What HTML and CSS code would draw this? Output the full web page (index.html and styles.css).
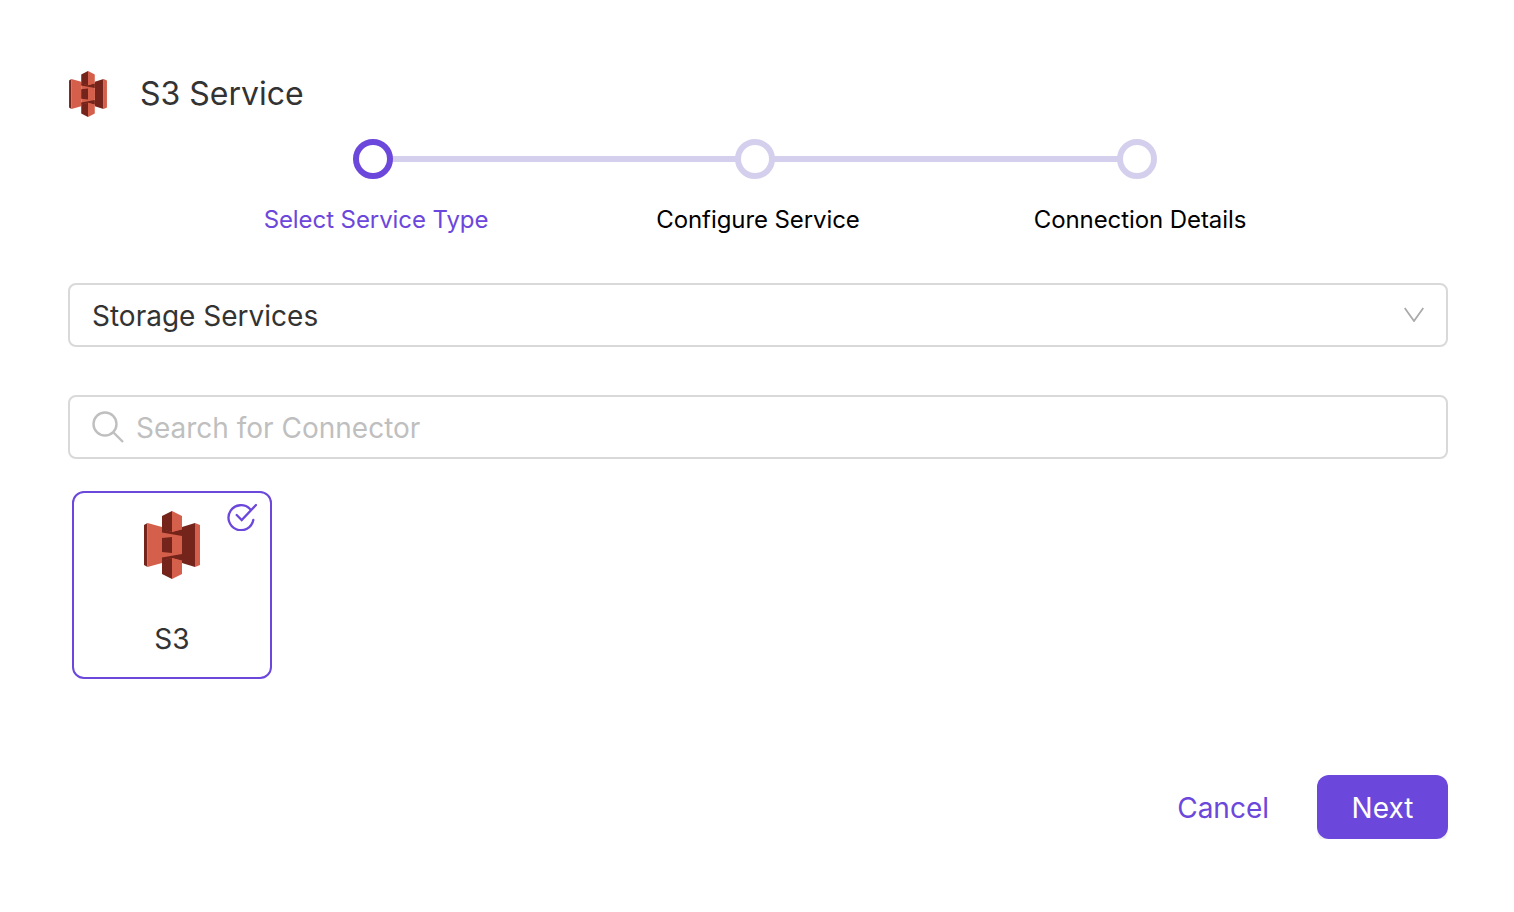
FILE: index.html
```html
<!DOCTYPE html>
<html lang="en">
<head>
    <meta charset="UTF-8">
    <title>S3 Service</title>
    <link rel="stylesheet" href="styles.css">
</head>
<body>
    <svg class="defs" width="0" height="0">
        <symbol id="s3-logo" viewBox="0 0 56 68">
            <!-- wings -->
            <path fill="#74241a" d="M0 14 3.5 12V56L0 54Z"/>
            <path fill="#d45f4a" d="M3.5 12 18 16V52L3.5 56Z"/>
            <path fill="#74241a" d="M38 16 51 12V56L38 52Z"/>
            <path fill="#d45f4a" d="M51 12 56 14V54L51 56Z"/>
            <!-- links between the towers -->
            <path fill="#d45f4a" d="M18 18H38V50H18Z"/>
            <path fill="#74241a" d="M18 18 28 21 38 18V25L18 21.5Z"/>
            <path fill="#74241a" d="M18 46.5 38 43V50L28 47 18 50Z"/>
            <!-- towers -->
            <path fill="#74241a" d="M18 5 28 0V21L18 18.5Z"/>
            <path fill="#d45f4a" d="M28 0 38 5V18.5L28 21Z"/>
            <path fill="#74241a" d="M18 27 28 26V42L18 41Z"/>
            <path fill="#d45f4a" d="M28 26 38 27V41L28 42Z"/>
            <path fill="#74241a" d="M18 49.5 28 47V68L18 63Z"/>
            <path fill="#d45f4a" d="M28 47 38 49.5V63L28 68Z"/>
        </symbol>
    </svg>

    <div class="container">
        <div class="header">
            <svg class="header-logo"><use href="#s3-logo"/></svg>
            <h1>S3 Service</h1>
        </div>

        <div class="steps">
            <div class="step active">
                <div class="dot"></div>
                <div class="step-label">Select Service Type</div>
            </div>
            <div class="step">
                <div class="dot"></div>
                <div class="step-label">Configure Service</div>
            </div>
            <div class="step last">
                <div class="dot"></div>
                <div class="step-label">Connection Details</div>
            </div>
        </div>

        <div class="field select">
            <span class="field-text">Storage Services</span>
            <svg class="chevron" width="20" height="15" viewBox="0 0 20 15"><path d="M.7 1 10 14 19.3 1" fill="none" stroke="#aaa" stroke-width="1.8"/></svg>
        </div>

        <div class="field search">
            <svg class="search-icon" width="32" height="32" viewBox="0 0 32 32"><circle cx="13" cy="13" r="11.5" fill="none" stroke="#bfbfbf" stroke-width="2.4"/><path d="M21.5 21.5 31 31" fill="none" stroke="#bfbfbf" stroke-width="2.4"/></svg>
            <span class="field-text">Search for Connector</span>
        </div>

        <div class="card">
            <svg class="check" width="30" height="28" viewBox="0 0 30 28"><path d="M23 6A12.5 12.5 0 1 0 26.3 17" fill="none" stroke="#6b47dc" stroke-width="2.3" stroke-linecap="round"/><path d="M9.7 12 14.7 17 29 2" fill="none" stroke="#6b47dc" stroke-width="2.3" stroke-linecap="round"/></svg>
            <svg class="card-logo"><use href="#s3-logo"/></svg>
            <div class="card-name">S3</div>
        </div>

        <div class="actions">
            <button class="cancel" type="button">Cancel</button>
            <button class="next" type="button">Next</button>
        </div>
    </div>
</body>
</html>
```

FILE: styles.css
```css
body {
    font-family: Inter, "Liberation Sans", sans-serif;
    background-color: #fff;
    margin: 0;
    padding: 0;
}

.defs {
    position: absolute;
}

.container {
    width: 1380px;
    margin-left: 68px;
    padding-top: 71px;
}

.header {
    display: flex;
    align-items: center;
    height: 46px;
}

.header-logo {
    width: 38px;
    height: 46px;
    margin-left: 1px;
}

h1 {
    margin: 0 0 0 33px;
    padding-bottom: 2px;
    font-size: 32px;
    font-weight: 400;
    color: #333;
}

.steps {
    display: flex;
    margin-top: 22px;
    margin-left: 117px;
}

.step {
    position: relative;
    width: 382px;
    display: flex;
    flex-direction: column;
    align-items: center;
}

.step::after {
    content: "";
    position: absolute;
    top: 17px;
    left: 50%;
    width: 100%;
    height: 6px;
    background-color: #d5cfee;
}

.step.last::after {
    display: none;
}

.dot {
    position: relative;
    z-index: 1;
    box-sizing: border-box;
    width: 40px;
    height: 40px;
    margin-left: -6px;
    background-color: #fff;
    border: 6px solid #d5cfee;
    border-radius: 50%;
}

.step.active .dot {
    border-color: #6b47dc;
}

.step-label {
    margin-top: 25px;
    font-size: 24px;
    line-height: 31px;
    letter-spacing: -0.08px;
    color: #000;
}

.step.active .step-label {
    color: #6b47dc;
}

.field {
    box-sizing: border-box;
    display: flex;
    align-items: center;
    height: 64px;
    border: 2px solid #d9d9d9;
    border-radius: 8px;
    font-size: 28px;
}

.field-text {
    padding-top: 2px;
}

.select {
    justify-content: space-between;
    margin-top: 48px;
    padding: 0 22px;
    color: #333;
}

.chevron {
    margin-top: -2px;
}

.search {
    margin-top: 48px;
    padding: 0 22px;
    gap: 12px;
    color: #bfbfbf;
}

.card {
    position: relative;
    box-sizing: border-box;
    width: 200px;
    height: 188px;
    margin: 32px 0 0 4px;
    padding-top: 18px;
    border: 2px solid #6b47dc;
    border-radius: 12px;
    text-align: center;
}

.card-logo {
    display: block;
    width: 56px;
    height: 68px;
    margin: 0 auto;
}

.card-name {
    margin-top: 43px;
    font-size: 28px;
    line-height: 34px;
    color: #333;
}

.check {
    position: absolute;
    top: 10px;
    right: 13px;
}

.actions {
    display: flex;
    justify-content: flex-end;
    align-items: center;
    gap: 48px;
    margin-top: 96px;
}

button {
    font-family: inherit;
    font-size: 28px;
    border: none;
    cursor: pointer;
}

.cancel {
    padding: 2px 0 0;
    background: none;
    color: #6b47dc;
}

.next {
    width: 131px;
    height: 64px;
    padding: 2px 0 0;
    background-color: #6b47dc;
    color: #fff;
    border-radius: 12px;
    box-shadow: 0 4px 0 #f2f2f2;
}
```
